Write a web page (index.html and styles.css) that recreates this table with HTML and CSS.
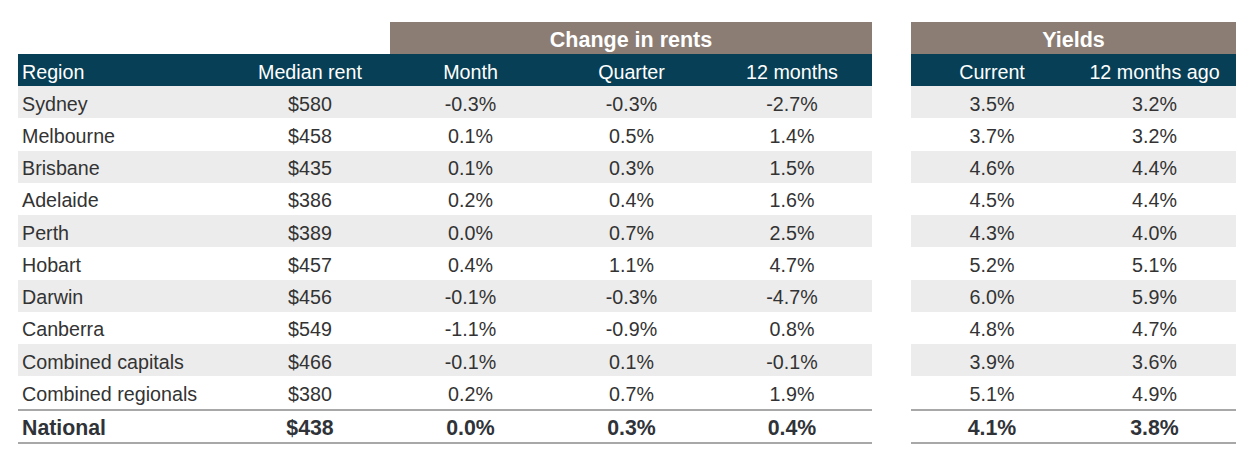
FILE: index.html
```html
<!DOCTYPE html>
<html>
<head>
<meta charset="utf-8">
<link rel="stylesheet" href="styles.css">
</head>
<body>
<div class="wrap">
  <table class="tbl tbl-left">
    <colgroup>
      <col class="c-region"><col class="c-160"><col class="c-161"><col class="c-161"><col class="c-160">
    </colgroup>
    <thead>
      <tr class="group-row">
        <th class="blank"></th><th class="blank"></th>
        <th class="group" colspan="3">Change in rents</th>
      </tr>
      <tr class="head-row">
        <th class="left">Region</th><th>Median rent</th><th>Month</th><th>Quarter</th><th>12 months</th>
      </tr>
    </thead>
    <tbody>
      <tr class="odd"><td class="left">Sydney</td><td>$580</td><td>-0.3%</td><td>-0.3%</td><td>-2.7%</td></tr>
      <tr><td class="left">Melbourne</td><td>$458</td><td>0.1%</td><td>0.5%</td><td>1.4%</td></tr>
      <tr class="odd"><td class="left">Brisbane</td><td>$435</td><td>0.1%</td><td>0.3%</td><td>1.5%</td></tr>
      <tr><td class="left">Adelaide</td><td>$386</td><td>0.2%</td><td>0.4%</td><td>1.6%</td></tr>
      <tr class="odd"><td class="left">Perth</td><td>$389</td><td>0.0%</td><td>0.7%</td><td>2.5%</td></tr>
      <tr><td class="left">Hobart</td><td>$457</td><td>0.4%</td><td>1.1%</td><td>4.7%</td></tr>
      <tr class="odd"><td class="left">Darwin</td><td>$456</td><td>-0.1%</td><td>-0.3%</td><td>-4.7%</td></tr>
      <tr><td class="left">Canberra</td><td>$549</td><td>-1.1%</td><td>-0.9%</td><td>0.8%</td></tr>
      <tr class="odd"><td class="left">Combined capitals</td><td>$466</td><td>-0.1%</td><td>0.1%</td><td>-0.1%</td></tr>
      <tr><td class="left">Combined regionals</td><td>$380</td><td>0.2%</td><td>0.7%</td><td>1.9%</td></tr>
      <tr class="total"><td class="left">National</td><td>$438</td><td>0.0%</td><td>0.3%</td><td>0.4%</td></tr>
    </tbody>
  </table>

  <table class="tbl tbl-right">
    <colgroup>
      <col class="c-162"><col class="c-163">
    </colgroup>
    <thead>
      <tr class="group-row">
        <th class="group" colspan="2">Yields</th>
      </tr>
      <tr class="head-row">
        <th>Current</th><th>12 months ago</th>
      </tr>
    </thead>
    <tbody>
      <tr class="odd"><td>3.5%</td><td>3.2%</td></tr>
      <tr><td>3.7%</td><td>3.2%</td></tr>
      <tr class="odd"><td>4.6%</td><td>4.4%</td></tr>
      <tr><td>4.5%</td><td>4.4%</td></tr>
      <tr class="odd"><td>4.3%</td><td>4.0%</td></tr>
      <tr><td>5.2%</td><td>5.1%</td></tr>
      <tr class="odd"><td>6.0%</td><td>5.9%</td></tr>
      <tr><td>4.8%</td><td>4.7%</td></tr>
      <tr class="odd"><td>3.9%</td><td>3.6%</td></tr>
      <tr><td>5.1%</td><td>4.9%</td></tr>
      <tr class="total"><td>4.1%</td><td>3.8%</td></tr>
    </tbody>
  </table>
</div>
</body>
</html>
```

FILE: styles.css
```css
html, body {
  margin: 0;
  padding: 0;
  background: #ffffff;
}

body {
  font-family: "Liberation Sans", Arial, sans-serif;
  color: #333333;
}

.wrap {
  display: flex;
  align-items: flex-start;
  gap: 39px;
  padding: 22px 0 0 18px;
}

.tbl {
  border-collapse: collapse;
  table-layout: fixed;
  border-spacing: 0;
}

.tbl-left { width: 854px; }
.tbl-right { width: 325px; }

.c-region { width: 212px; }
.c-160 { width: 160px; }
.c-161 { width: 161px; }
.c-162 { width: 162px; }
.c-163 { width: 163px; }

.tbl th,
.tbl td {
  padding: 4px 0 0 0;
  height: 28px;
  line-height: 28px;
  text-align: center;
  white-space: nowrap;
  font-size: 19.7px;
  font-weight: normal;
}

.tbl td {
  height: 27.75px;
  padding-top: 4.5px;
  line-height: 27.75px;
}

.tbl .left {
  text-align: left;
  padding-left: 4px;
}

.group-row th.group {
  background: #8b7d74;
  color: #ffffff;
  font-weight: bold;
  font-size: 21.5px;
  padding-top: 4px;
  height: 28px;
  line-height: 28px;
}

.group-row th.blank {
  background: transparent;
}

.head-row th {
  background: #073f56;
  color: #ffffff;
}

tbody tr.odd td {
  background: #ececec;
}

.tbl tbody tr.total td {
  border-top: 2px solid #a8a8a8;
  border-bottom: 2px solid #a8a8a8;
  font-weight: bold;
  font-size: 21.3px;
  color: #2f3338;
  padding-top: 4px;
  height: 27px;
  line-height: 27px;
}
```
